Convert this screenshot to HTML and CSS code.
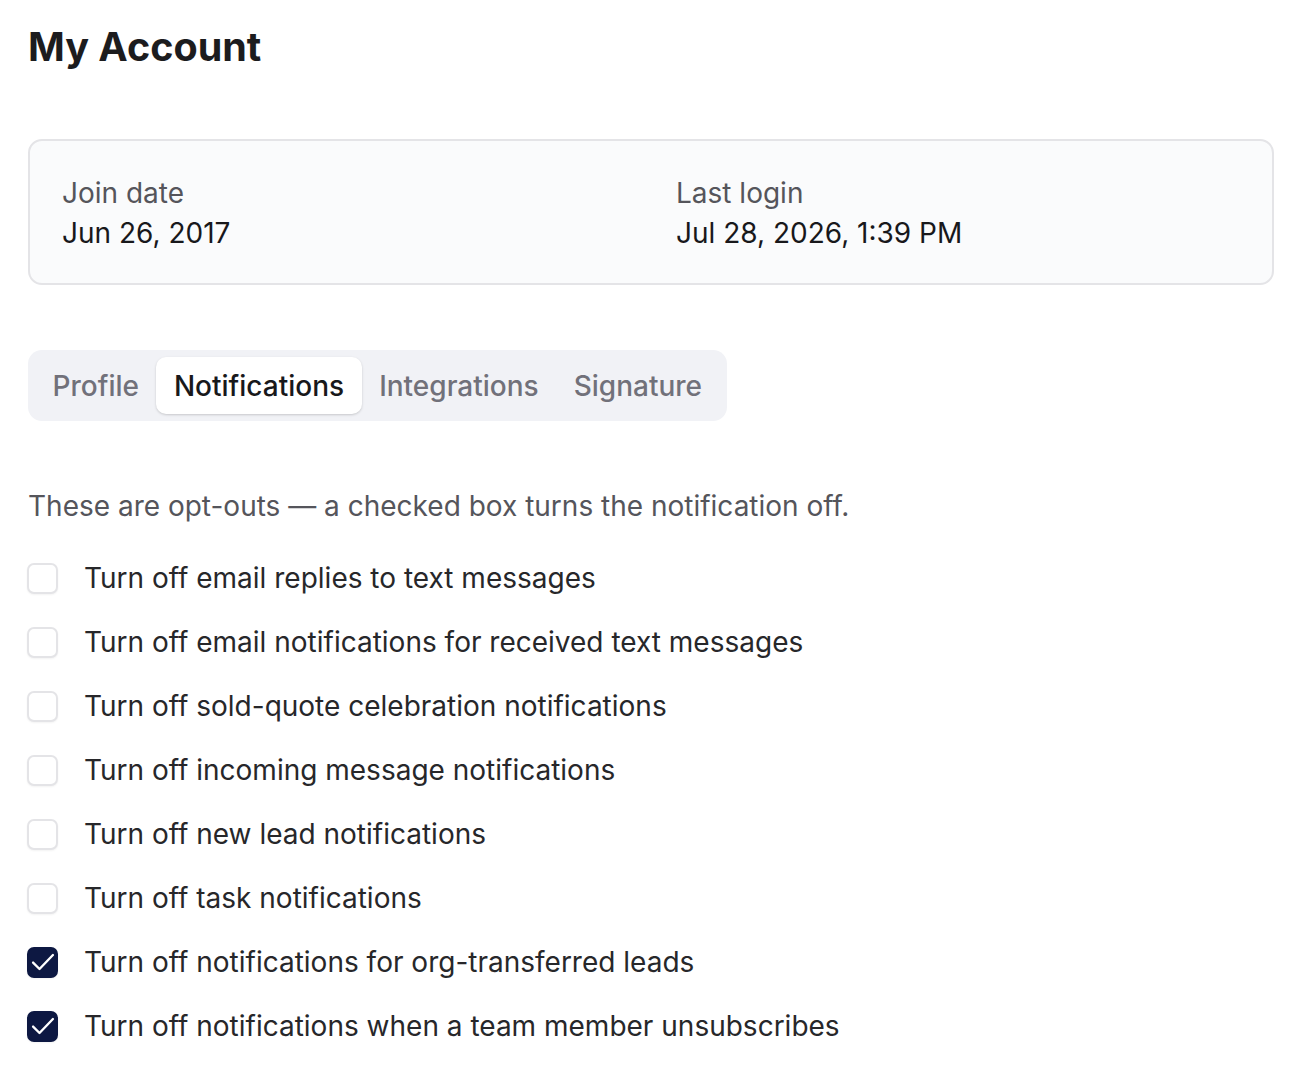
FILE: index.html
```html
<!DOCTYPE html>
<html lang="en">
<head>
    <meta charset="UTF-8">
    <meta name="viewport" content="width=device-width, initial-scale=1.0">
    <title>My Account</title>
    <link rel="stylesheet" href="styles.css">
</head>
<body>

    <div class="page">
        <h1 class="page-title">My Account</h1>

        <div class="info-card">
            <div class="info-item">
                <div class="info-label">Join date</div>
                <div class="info-value">Jun 26, 2017</div>
            </div>
            <div class="info-item">
                <div class="info-label">Last login</div>
                <div class="info-value">Jul 28, 2026, 1:39 PM</div>
            </div>
        </div>

        <div class="tabs">
            <button type="button" class="tab">Profile</button>
            <button type="button" class="tab active">Notifications</button>
            <button type="button" class="tab">Integrations</button>
            <button type="button" class="tab">Signature</button>
        </div>

        <p class="hint">These are opt-outs — a checked box turns the notification off.</p>

        <div class="options">
            <label class="option"><input type="checkbox"><span class="box"><svg viewBox="0 0 24 24"><path d="M3.5 12.5l5.5 5.5L20.5 6"/></svg></span>Turn off email replies to text messages</label>
            <label class="option"><input type="checkbox"><span class="box"><svg viewBox="0 0 24 24"><path d="M3.5 12.5l5.5 5.5L20.5 6"/></svg></span>Turn off email notifications for received text messages</label>
            <label class="option"><input type="checkbox"><span class="box"><svg viewBox="0 0 24 24"><path d="M3.5 12.5l5.5 5.5L20.5 6"/></svg></span>Turn off sold-quote celebration notifications</label>
            <label class="option"><input type="checkbox"><span class="box"><svg viewBox="0 0 24 24"><path d="M3.5 12.5l5.5 5.5L20.5 6"/></svg></span>Turn off incoming message notifications</label>
            <label class="option"><input type="checkbox"><span class="box"><svg viewBox="0 0 24 24"><path d="M3.5 12.5l5.5 5.5L20.5 6"/></svg></span>Turn off new lead notifications</label>
            <label class="option"><input type="checkbox"><span class="box"><svg viewBox="0 0 24 24"><path d="M3.5 12.5l5.5 5.5L20.5 6"/></svg></span>Turn off task notifications</label>
            <label class="option"><input type="checkbox" checked><span class="box"><svg viewBox="0 0 24 24"><path d="M3.5 12.5l5.5 5.5L20.5 6"/></svg></span>Turn off notifications for org-transferred leads</label>
            <label class="option"><input type="checkbox" checked><span class="box"><svg viewBox="0 0 24 24"><path d="M3.5 12.5l5.5 5.5L20.5 6"/></svg></span>Turn off notifications when a team member unsubscribes</label>
        </div>
    </div>

</body>
</html>
```

FILE: styles.css
```css
body {
    margin: 0;
    background-color: #ffffff;
    color: #18181b;
    font-family: "Inter", "Noto Sans", sans-serif;
}
.page {
    padding: 22px 36px 40px 28px;
}
.page-title {
    margin: 0 0 67px 0;
    font-size: 39.5px;
    line-height: 50px;
    font-weight: 700;
    color: #1c1c1e;
}
.info-card {
    display: grid;
    grid-template-columns: 1fr 1fr;
    column-gap: 50px;
    padding: 32px 32px 30px 32px;
    border: 2px solid #e4e4e7;
    border-radius: 14px;
    background-color: #fafbfc;
    font-size: 28px;
    line-height: 40px;
}
.info-label {
    color: #55555b;
}
.info-value {
    color: #18181b;
}
.tabs {
    display: inline-flex;
    margin-top: 65px;
    padding: 7px;
    border-radius: 14px;
    background-color: #f1f2f6;
}
.tab {
    height: 57px;
    padding: 0 17.5px;
    border: none;
    border-radius: 10px;
    background: none;
    font-family: inherit;
    font-size: 28px;
    font-weight: 500;
    color: #71717a;
    cursor: pointer;
}
.tab.active {
    background-color: #ffffff;
    color: #18181b;
    box-shadow: 0 1px 3px rgba(0,0,0,0.12), 0 1px 2px rgba(0,0,0,0.06);
}
.hint {
    margin: 65px 0 32px 0;
    font-size: 28px;
    line-height: 40px;
    color: #55555b;
}
.options {
    display: flex;
    flex-direction: column;
    gap: 24px;
}
.option {
    display: flex;
    align-items: center;
    gap: 26px;
    font-size: 28px;
    line-height: 40px;
    color: #27272a;
    cursor: pointer;
}
.option input {
    display: none;
}
.box {
    display: flex;
    align-items: center;
    justify-content: center;
    width: 27px;
    height: 27px;
    margin-left: -1px;
    flex-shrink: 0;
    border: 2px solid #e4e4e7;
    border-radius: 7px;
    background-color: #ffffff;
    box-shadow: 0 1px 2px rgba(0,0,0,0.05);
}
.box svg {
    display: none;
    flex-shrink: 0;
    width: 28px;
    height: 28px;
    fill: none;
    stroke: #ffffff;
    stroke-width: 2;
    stroke-linecap: round;
    stroke-linejoin: round;
}
.option input:checked + .box {
    background-color: #0d1842;
    border-color: #0d1842;
}
.option input:checked + .box svg {
    display: block;
}
```
